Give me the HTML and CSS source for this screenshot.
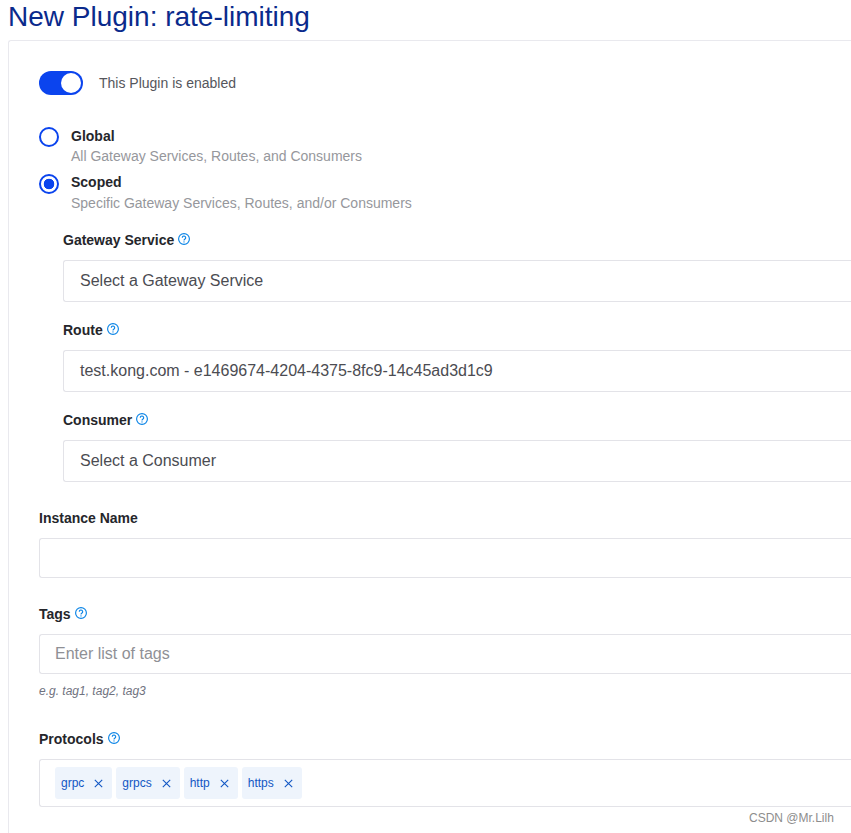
FILE: index.html
```html
<!DOCTYPE html>
<html lang="en">
<head>
<meta charset="utf-8">
<title>New Plugin: rate-limiting</title>
<link rel="stylesheet" href="styles.css">
</head>
<body>
<svg class="defs" width="0" height="0" aria-hidden="true">
  <symbol id="help" viewBox="0 0 12 12">
    <circle cx="6" cy="6" r="5.4" fill="none" stroke="#0a84e6" stroke-width="1.15"/>
    <path d="M4.3 4.8a1.7 1.7 0 1 1 2.7 1.3c-.7.4-1 .6-1 1.3" fill="none" stroke="#0a84e6" stroke-width="1.1"/>
    <circle cx="6" cy="8.9" r=".65" fill="#0a84e6"/>
  </symbol>
  <symbol id="close" viewBox="0 0 9 9">
    <path d="M.8.8l7.4 7.4M8.2.8L.8 8.2" fill="none" stroke="#1257c4" stroke-width="1.1"/>
  </symbol>
</svg>
<h1 class="title">New Plugin: rate-limiting</h1>
<main class="card">
  <div class="switch-row">
    <span class="switch"><span class="knob"></span></span>
    <span class="switch-label">This Plugin is enabled</span>
  </div>

  <div class="radio-group">
    <div class="radio-row">
      <span class="radio"></span>
      <div class="radio-text">
        <div class="radio-title">Global</div>
        <div class="radio-desc">All Gateway Services, Routes, and Consumers</div>
      </div>
    </div>
    <div class="radio-row radio-row-scoped">
      <span class="radio radio-on"></span>
      <div class="radio-text">
        <div class="radio-title">Scoped</div>
        <div class="radio-desc">Specific Gateway Services, Routes, and/or Consumers</div>
      </div>
    </div>
  </div>

  <div class="scoped">
    <div class="scoped-field">
      <label class="label">Gateway Service <svg class="help"><use href="#help"/></svg></label>
      <div class="select">Select a Gateway Service</div>
    </div>
    <div class="scoped-field">
      <label class="label">Route <svg class="help"><use href="#help"/></svg></label>
      <div class="select">test.kong.com - e1469674-4204-4375-8fc9-14c45ad3d1c9</div>
    </div>
    <div class="scoped-field">
      <label class="label">Consumer <svg class="help"><use href="#help"/></svg></label>
      <div class="select">Select a Consumer</div>
    </div>
  </div>

  <div class="field field-name">
    <label class="label">Instance Name</label>
    <div class="input"></div>
  </div>
  <div class="field field-tags">
    <label class="label">Tags <svg class="help"><use href="#help"/></svg></label>
    <div class="input placeholder">Enter list of tags</div>
    <div class="hint">e.g. tag1, tag2, tag3</div>
  </div>
  <div class="field field-protocols">
    <label class="label">Protocols <svg class="help"><use href="#help"/></svg></label>
    <div class="multi">
      <span class="chip">grpc<svg class="x"><use href="#close"/></svg></span>
      <span class="chip">grpcs<svg class="x"><use href="#close"/></svg></span>
      <span class="chip">http<svg class="x"><use href="#close"/></svg></span>
      <span class="chip">https<svg class="x"><use href="#close"/></svg></span>
    </div>
  </div>
</main>
<div class="watermark">CSDN @Mr.Lilh</div>
</body>
</html>
```

FILE: styles.css
```css
* { box-sizing: border-box; }
html, body { height: 833px; overflow: hidden; }
body {
  margin: 0;
  background: #fff;
  font-family: "Liberation Sans", Arial, sans-serif;
  color: #1f2024;
  width: 851px;
  position: relative;
}
.defs { position: absolute; }
.title {
  margin: 0;
  padding-left: 8px;
  height: 40px;
  line-height: 34px;
  font-size: 28px;
  font-weight: 400;
  color: #0a2a8c;
}
.card {
  margin-left: 8px;
  width: 843px;
  height: 793px;
  overflow: hidden;
  border: 1px solid #e9e9ee;
  border-right: 0;
  border-bottom: 0;
  border-radius: 3px 0 0 0;
  padding: 30px 0 0 30px;
}
.switch-row { display: flex; align-items: center; height: 24px; }
.switch {
  width: 44px;
  height: 24px;
  border-radius: 12px;
  background: #0b44ee;
  display: flex;
  justify-content: flex-end;
  align-items: center;
  padding-right: 2px;
}
.knob { width: 20px; height: 20px; border-radius: 50%; background: #fff; }
.switch-label { margin-left: 16px; font-size: 14px; color: #55565c; }
.radio-group { margin-top: 32px; height: 102px; }
.radio-row { display: flex; height: 46px; }
.radio {
  width: 20px;
  height: 20px;
  border: 2px solid #0b44ee;
  border-radius: 50%;
  background: #fff;
  flex: none;
}
.radio-on {
  margin-top: 1px;
  background: radial-gradient(circle, #0b44ee 0 5px, #fff 5.6px);
}
.radio-text { margin-left: 12px; }
.radio-title { font-size: 14px; font-weight: 700; line-height: 18px; color: #25262b; }
.radio-desc { font-size: 14px; line-height: 22px; color: #96979c; }
.radio-row-scoped .radio-desc { margin-top: 1px; }
.scoped { padding-left: 24px; margin-top: 1px; }
.scoped-field { height: 90px; }
.label {
  display: flex;
  align-items: center;
  gap: 4px;
  height: 20px;
  font-size: 14px;
  font-weight: 700;
  color: #25262b;
}
.help { width: 12px; height: 12px; margin-top: -3px; }
.select {
  margin-top: 10px;
  height: 42px;
  border: 1px solid #e3e3e8;
  border-radius: 3px 0 0 3px;
  border-right: 0;
  padding-left: 16px;
  display: flex;
  align-items: center;
  font-size: 16px;
  color: #4b4c52;
}
.field-name { margin-top: 8px; }
.field-tags { margin-top: 26px; }
.field-protocols { margin-top: 31px; }
.input {
  margin-top: 10px;
  height: 40px;
  border: 1px solid #e3e3e8;
  border-right: 0;
  border-radius: 3px 0 0 3px;
  padding-left: 15px;
  display: flex;
  align-items: center;
  font-size: 16px;
}
.placeholder { color: #8f9095; }
.hint { margin-top: 10px; font-size: 12px; line-height: 14px; font-style: italic; color: #6f7280; }
.multi {
  margin-top: 10px;
  height: 48px;
  border: 1px solid #e3e3e8;
  border-right: 0;
  border-radius: 3px 0 0 3px;
  padding-left: 15px;
  display: flex;
  align-items: center;
  gap: 4px;
}
.chip {
  height: 32px;
  padding: 0 9px 0 6px;
  border-radius: 3px;
  background: #eef4fc;
  color: #1257c4;
  font-size: 12px;
  display: flex;
  align-items: center;
  gap: 10px;
}
.x { width: 9px; height: 9px; }
.watermark {
  position: absolute;
  left: 749px;
  top: 811px;
  font-size: 12px;
  line-height: 14px;
  color: #8d8d8d;
}
```
